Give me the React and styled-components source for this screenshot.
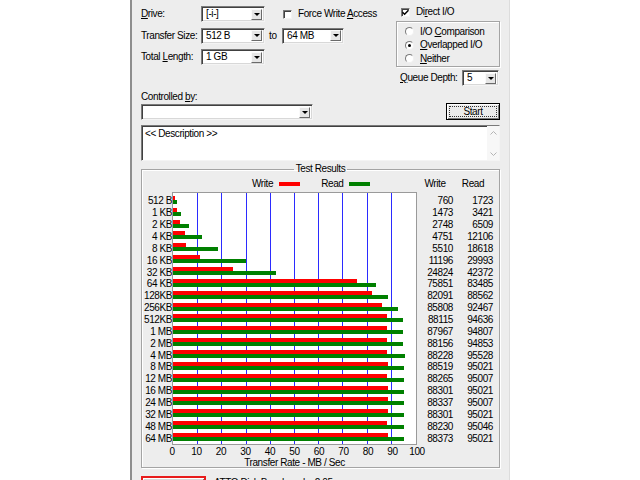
import React from "react";
import styled, { createGlobalStyle } from "styled-components";

const GlobalStyle = createGlobalStyle`
  html, body {
    margin: 0;
    padding: 0;
    background: #ffffff;
    height: 480px;
    overflow: hidden;
  }
  body {
    font-family: "Liberation Sans", Arial, sans-serif;
    font-size: 10px;
    letter-spacing: -0.4px;
    color: #000;
  }
`;

const Page = styled.div`
  display: flex;
  justify-content: center;
  height: 480px;
  overflow: hidden;
`;

const Window = styled.div`
  width: 380px;
  height: 520px;
  box-sizing: border-box;
  background: #ededed;
  border-left: 2px solid #8e8e8e;
  border-right: 1px solid #dcdcdc;
  padding: 0 9px;
  display: flex;
  flex-direction: column;
`;

const TopSection = styled.div`
  display: flex;
  padding-top: 4px;
  height: 82px;
`;

const LeftPane = styled.div`
  width: 255px;
  display: flex;
  flex-direction: column;
  gap: 5.5px;
  padding-top: 2px;
`;

const RightPane = styled.div`
  width: 104px;
  display: flex;
  flex-direction: column;
`;

const FieldRow = styled.div`
  display: flex;
  align-items: center;
  height: 16px;
  padding-left: ${(p) => p.$pl || 0}px;
`;

const Label = styled.span`
  width: ${(p) => p.$w || 60}px;
  flex: none;
  white-space: nowrap;
  line-height: 12px;
`;

const U = styled.span`
  text-decoration: underline;
`;

const ComboBox = styled.div`
  width: ${(p) => p.$w}px;
  height: 16px;
  box-sizing: border-box;
  flex: none;
  background: #fff;
  border: 1px solid;
  border-color: #7a7a7a #f4f4f4 #f4f4f4 #7a7a7a;
  box-shadow: inset 1px 1px 0 #404040, inset -1px -1px 0 #d8d8d8;
  display: flex;
  align-items: center;
  padding: 0 2px 0 4px;
  line-height: 12px;
`;

const ComboText = styled.span`
  flex: 1;
  white-space: nowrap;
  overflow: hidden;
`;

const DropButton = styled.span`
  width: 11px;
  height: 11px;
  box-sizing: border-box;
  background: #e6e6e6;
  border: 1px solid;
  border-color: #fafafa #6a6a6a #6a6a6a #fafafa;
  display: flex;
  align-items: center;
  justify-content: center;
  &::after {
    content: "";
    border-left: 3px solid transparent;
    border-right: 3px solid transparent;
    border-top: 3px solid #000;
  }
`;

const Combo = ({ w, value }) => (
  <ComboBox $w={w}>
    <ComboText>{value}</ComboText>
    <DropButton />
  </ComboBox>
);

const CheckWrap = styled.label`
  display: flex;
  align-items: center;
  gap: 6px;
  margin-left: ${(p) => p.$ml || 0}px;
  white-space: nowrap;
  line-height: 12px;
`;

const CheckBox = styled.span`
  width: 9px;
  height: 9px;
  box-sizing: border-box;
  flex: none;
  background: #fff;
  border: 1px solid;
  border-color: #7a7a7a #f4f4f4 #f4f4f4 #7a7a7a;
  box-shadow: inset 1px 1px 0 #404040;
  display: flex;
  align-items: center;
  justify-content: center;
`;

const Check = ({ checked, children, ml }) => (
  <CheckWrap $ml={ml}>
    <CheckBox>
      {checked && (
        <svg width="7" height="7" viewBox="0 0 7 7">
          <path d="M0.5 3.2 L2.6 5.3 L6.5 1.2" stroke="#000" strokeWidth="1.5" fill="none" />
        </svg>
      )}
    </CheckBox>
    <span>{children}</span>
  </CheckWrap>
);

const ToText = styled.span`
  width: 17px;
  padding-left: 4px;
  box-sizing: border-box;
  flex: none;
`;

const RadioGroup = styled.div`
  margin-top: 1px;
  height: 46px;
  box-sizing: border-box;
  border: 1px solid #a4a4a4;
  box-shadow: inset 1px 1px 0 #fff, 1px 1px 0 #fff;
  padding: 3px 0 0 8px;
  display: flex;
  flex-direction: column;
`;

const RadioRow = styled.div`
  display: flex;
  align-items: center;
  gap: 6px;
  height: 13.5px;
  line-height: 12px;
`;

const RadioDot = styled.span`
  width: 9px;
  height: 9px;
  box-sizing: border-box;
  border-radius: 50%;
  background: #fff;
  border: 1px solid;
  border-color: #7a7a7a #f0f0f0 #f0f0f0 #7a7a7a;
  display: flex;
  align-items: center;
  justify-content: center;
  &::after {
    content: "";
    width: 3px;
    height: 3px;
    border-radius: 50%;
    background: ${(p) => (p.$on ? "#000" : "transparent")};
  }
`;

const Radio = ({ on, children }) => (
  <RadioRow>
    <RadioDot $on={on} />
    <span>{children}</span>
  </RadioRow>
);

const QueueRow = styled(FieldRow)`
  margin-top: 3px;
  padding-left: 4px;
`;

const SmallLabel = styled.div`
  margin-top: 5px;
  line-height: 12px;
`;

const ControlRow = styled.div`
  display: flex;
  align-items: flex-start;
  justify-content: space-between;
  margin-top: 1px;
  height: 16px;
`;

const StartButton = styled.button`
  width: 54px;
  height: 17px;
  margin-top: -1px;
  box-sizing: border-box;
  border: 1px solid #000;
  background: #ececec;
  box-shadow: inset 1px 1px 0 #fff, inset -1px -1px 0 #7a7a7a;
  font: inherit;
  letter-spacing: inherit;
  padding: 2px;
  display: flex;
`;

const FocusRect = styled.span`
  flex: 1;
  border: 1px dotted #333;
  line-height: 9px;
  text-align: center;
`;

const Description = styled.div`
  margin-top: 5px;
  height: 36px;
  box-sizing: border-box;
  background: #fff;
  border: 1px solid;
  border-color: #7a7a7a #f4f4f4 #f4f4f4 #7a7a7a;
  box-shadow: inset 1px 1px 0 #404040;
  display: flex;
`;

const DescText = styled.div`
  flex: 1;
  padding: 2px 3px;
  line-height: 12px;
`;

const ScrollBar = styled.div`
  width: 12px;
  background: #f7f7f7;
  display: flex;
  flex-direction: column;
  justify-content: space-between;
  align-items: center;
  padding: 5px 0 4px;
`;

const GroupBox = styled.fieldset`
  margin: 2px 0 0 0;
  padding: 0;
  height: 305px;
  box-sizing: border-box;
  border: 1px solid #a4a4a4;
  box-shadow: inset 1px 1px 0 #fff, 1px 1px 0 #fff;
  min-width: 0;
`;

const Legend = styled.legend`
  margin: 0 auto;
  padding: 0 2px;
  line-height: 12px;
`;

const ChartGrid = styled.div`
  display: grid;
  grid-template-columns: 28px 245px 36px 40px;
  padding-left: 2px;
  margin-top: 3px;
`;

const HeadCell = styled.div`
  height: 12px;
  line-height: 12px;
  margin-bottom: 2px;
  grid-column: ${(p) => p.$col};
  display: flex;
  align-items: center;
  justify-content: ${(p) => (p.$legend ? "flex-start" : "center")};
  padding-left: ${(p) => (p.$legend ? 80 : 0)}px;
  gap: 6px;
`;

const Swatch = styled.span`
  width: 21px;
  height: 4px;
  background: ${(p) => p.$c};
  margin-right: 15px;
`;

const Column = styled.div`
  height: 253px;
  box-sizing: border-box;
  padding: 2px 0;
  display: grid;
  grid-template-rows: repeat(21, minmax(0, 1fr));
`;

const RowLabel = styled.div`
  min-height: 0;
  line-height: 10px;
  white-space: nowrap;
  display: flex;
  align-items: center;
  justify-content: flex-end;
  padding: 3px ${(p) => p.$pr ?? 3}px 0 0;
`;

const Plot = styled.div`
  position: relative;
  height: 253px;
  box-sizing: border-box;
  background: #fff;
  border: 1px solid #9a9a9a;
  padding: 1px 0;
  display: grid;
  grid-template-rows: repeat(21, minmax(0, 1fr));
`;

const GridLines = styled.div`
  position: absolute;
  inset: 0;
  display: flex;
  justify-content: space-between;
`;

const GridLine = styled.span`
  width: 1px;
  background: ${(p) => (p.$hide ? "transparent" : "#2b2bff")};
`;

const BarRow = styled.div`
  position: relative;
  z-index: 1;
  min-height: 0;
  display: flex;
  flex-direction: column;
  justify-content: center;
`;

const Bar = styled.div`
  height: 4px;
  background: ${(p) => p.$c};
`;

const Ticks = styled.div`
  grid-column: 2;
  display: flex;
  justify-content: space-between;
  height: 11px;
  line-height: 11px;
  margin-top: 1px;
`;

const Tick = styled.span`
  width: 0;
  display: flex;
  justify-content: center;
  white-space: nowrap;
`;

const AxisTitle = styled.div`
  grid-column: 2;
  text-align: center;
  line-height: 11px;
`;

const Footer = styled.div`
  display: flex;
  align-items: flex-start;
  gap: 8px;
  margin-top: 8px;
`;

const RedButton = styled.div`
  width: 65px;
  height: 22px;
  box-sizing: border-box;
  border: 2px solid #e81c1c;
  background: #d8d8d8;
  box-shadow: inset 1px 1px 0 #fff, inset -1px -1px 0 #777;
`;

const FooterText = styled.span`
  line-height: 12px;
  padding-top: 1px;
`;

const sizes = ["512 B", "1 KB", "2 KB", "4 KB", "8 KB", "16 KB", "32 KB", "64 KB", "128KB", "256KB", "512KB", "1 MB", "2 MB", "4 MB", "8 MB", "12 MB", "16 MB", "24 MB", "32 MB", "48 MB", "64 MB"];
const writes = [760, 1473, 2748, 4751, 5510, 11196, 24824, 75851, 82091, 85808, 88115, 87967, 88156, 88228, 88519, 88265, 88301, 88337, 88301, 88230, 88373];
const reads = [1723, 3421, 6509, 12106, 18618, 29993, 42372, 83485, 88562, 92467, 94636, 94807, 94853, 95528, 95021, 95007, 95021, 95007, 95021, 95046, 95021];

const Chevron = ({ up }) => (
  <svg width="7" height="4" viewBox="0 0 7 4">
    <path d={up ? "M0.5 3.5 L3.5 0.5 L6.5 3.5" : "M0.5 0.5 L3.5 3.5 L6.5 0.5"} stroke="#b4b4b4" strokeWidth="1" fill="none" />
  </svg>
);

const App = () => (
  <Page>
    <GlobalStyle />
    <Window>
      <TopSection>
        <LeftPane>
          <FieldRow>
            <Label><U>D</U>rive:</Label>
            <Combo w={64} value="[-i-]" />
            <Check ml={18}>Force Write <U>A</U>ccess</Check>
          </FieldRow>
          <FieldRow>
            <Label>Transfer Size:</Label>
            <Combo w={64} value="512 B" />
            <ToText>to</ToText>
            <Combo w={62} value="64 MB" />
          </FieldRow>
          <FieldRow>
            <Label>Total <U>L</U>ength:</Label>
            <Combo w={64} value="1 GB" />
          </FieldRow>
        </LeftPane>
        <RightPane>
          <FieldRow $pl={5}>
            <Check checked>Di<U>r</U>ect I/O</Check>
          </FieldRow>
          <RadioGroup>
            <Radio>I/O <U>C</U>omparison</Radio>
            <Radio on><U>O</U>verlapped I/O</Radio>
            <Radio><U>N</U>either</Radio>
          </RadioGroup>
          <QueueRow>
            <Label $w={62}><U>Q</U>ueue Depth:</Label>
            <Combo w={37} value="5" />
          </QueueRow>
        </RightPane>
      </TopSection>

      <SmallLabel>Controlled <U>b</U>y:</SmallLabel>
      <ControlRow>
        <Combo w={172} value="" />
        <StartButton>
          <FocusRect>Start</FocusRect>
        </StartButton>
      </ControlRow>

      <Description>
        <DescText>{"<< Description >>"}</DescText>
        <ScrollBar>
          <Chevron up />
          <Chevron />
        </ScrollBar>
      </Description>

      <GroupBox>
        <Legend>Test Results</Legend>
        <ChartGrid>
          <HeadCell $col={2} $legend>
            <span>Write</span>
            <Swatch $c="#ff0000" />
            <span>Read</span>
            <Swatch $c="#008000" />
          </HeadCell>
          <HeadCell $col={3}>Write</HeadCell>
          <HeadCell $col={4}>Read</HeadCell>

          <Column>
            {sizes.map((s) => (
              <RowLabel key={s}>{s}</RowLabel>
            ))}
          </Column>
          <Plot>
            <GridLines>
              {Array.from({ length: 11 }, (_, i) => (
                <GridLine key={i} $hide={i === 0 || i === 10} />
              ))}
            </GridLines>
            {sizes.map((s, i) => (
              <BarRow key={s}>
                <Bar $c="#ff0000" style={{ width: `${writes[i] / 1000}%` }} />
                <Bar $c="#008000" style={{ width: `${reads[i] / 1000}%` }} />
              </BarRow>
            ))}
          </Plot>
          <Column>
            {writes.map((v, i) => (
              <RowLabel key={i} $pr={0}>{v}</RowLabel>
            ))}
          </Column>
          <Column>
            {reads.map((v, i) => (
              <RowLabel key={i} $pr={0}>{v}</RowLabel>
            ))}
          </Column>

          <Ticks>
            {Array.from({ length: 11 }, (_, i) => (
              <Tick key={i}>{i * 10}</Tick>
            ))}
          </Ticks>
          <AxisTitle>Transfer Rate - MB / Sec</AxisTitle>
        </ChartGrid>
      </GroupBox>

      <Footer>
        <RedButton />
        <FooterText>ATTO Disk Benchmark v2.05</FooterText>
      </Footer>
    </Window>
  </Page>
);

export default App;
